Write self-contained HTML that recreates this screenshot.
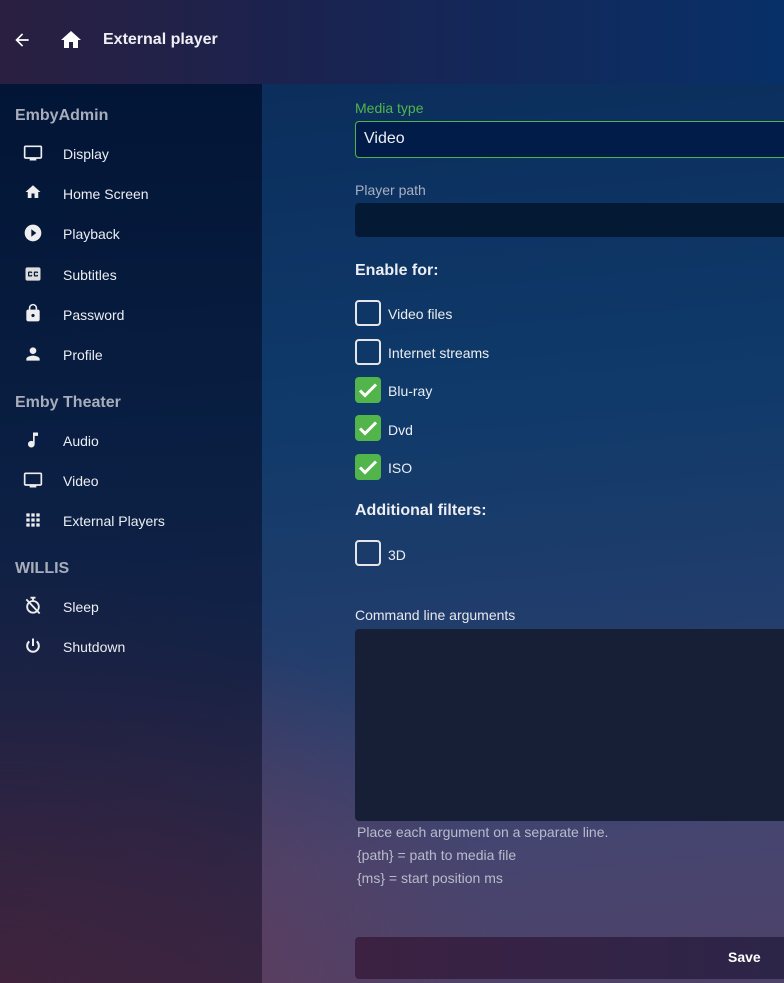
<!DOCTYPE html>
<html><head><meta charset="utf-8"><style>
*{margin:0;padding:0;box-sizing:border-box}
html,body{width:784px;height:983px;overflow:hidden}
body{font-family:"Liberation Sans",sans-serif;color:#e8e8ee;position:relative;
background:
radial-gradient(ellipse 500px 420px at 0% 100%, rgba(110,55,80,.8), rgba(110,55,80,0) 100%),
linear-gradient(175deg,#0a2a58 0%,#0f3a6a 42%,#223d6c 65%,#454570 85%,#4f4268 100%);}
.hdr{position:absolute;left:0;top:0;width:784px;height:84px;background:linear-gradient(90deg,#2a1f40 0%,#1a2350 40%,#083068 100%)}
.hdr .t{position:absolute;left:103px;top:31px;font-size:16px;font-weight:bold;color:#f0f0f4}
.side{position:absolute;left:0;top:84px;width:262px;height:899px;background:linear-gradient(180deg,rgba(0,15,45,.8) 0%,rgba(8,18,48,.65) 50%,rgba(25,12,35,.5) 100%)}
.sh{position:absolute;left:15px;font-size:16px;font-weight:bold;color:#a8adbb}
.it{position:absolute;left:63px;font-size:14px;color:#eceef2}
.ic{position:absolute;left:23px;width:20px;height:20px}
.lbl{position:absolute;left:355px;font-size:14px}
.cb{position:absolute;left:355px;width:26px;height:26px;border:2px solid #e6e6ea;border-radius:4px}
.cb.on{background:#52b54b;border:none}
.cl{position:absolute;left:388px;font-size:14px;color:#eceef2}
h3{position:absolute;left:355px;font-size:16px;font-weight:bold;color:#eceef2}
.hint{position:absolute;left:357px;font-size:14px;color:#b8bccb}
</style></head><body>
<div class="hdr">
<svg style="position:absolute;left:12px;top:30px" width="20" height="20" viewBox="0 0 24 24"><path fill="#fff" d="M20 11H7.83l5.59-5.59L12 4l-8 8 8 8 1.41-1.41L7.83 13H20v-2z"/></svg>
<svg style="position:absolute;left:59px;top:28px" width="24" height="24" viewBox="0 0 24 24"><path fill="#fff" d="M10 20v-6h4v6h5v-8h3L12 3 2 12h3v8z"/></svg>
<div class="t">External player</div>
</div>
<div class="side">
<div class="sh" style="top:23px">EmbyAdmin</div>
<svg class="ic" style="top:59px" viewBox="0 0 24 24"><path fill="#eee" d="M21 3H3c-1.1 0-2 .9-2 2v12c0 1.1.9 2 2 2h5v2h8v-2h5c1.1 0 2-.9 2-2V5c0-1.1-.9-2-2-2zm0 14H3V5h18v12z"/></svg>
<div class="it" style="top:62px">Display</div>
<svg class="ic" style="top:99px;left:24px;width:18px;height:18px" viewBox="0 0 24 24"><path fill="#eee" d="M10 20v-6h4v6h5v-8h3L12 3 2 12h3v8z"/></svg>
<div class="it" style="top:102px">Home Screen</div>
<svg class="ic" style="top:139px" viewBox="0 0 24 24"><path fill="#eee" d="M12 2C6.48 2 2 6.48 2 12s4.48 10 10 10 10-4.48 10-10S17.52 2 12 2zm-2 14.5v-9l6 4.5-6 4.5z"/></svg>
<div class="it" style="top:142px">Playback</div>
<svg class="ic" style="top:180px" viewBox="0 0 24 24"><path fill="#ddd" d="M19 4H5c-1.1 0-2 .9-2 2v12c0 1.1.9 2 2 2h14c1.1 0 2-.9 2-2V6c0-1.1-.9-2-2-2zm-8 7H9.5v-.5h-2v3h2V13H11v1c0 .55-.45 1-1 1H7c-.55 0-1-.45-1-1v-4c0-.55.45-1 1-1h3c.55 0 1 .45 1 1v1zm7 0h-1.5v-.5h-2v3h2V13H18v1c0 .55-.45 1-1 1h-3c-.55 0-1-.45-1-1v-4c0-.55.45-1 1-1h3c.55 0 1 .45 1 1v1z"/></svg>
<div class="it" style="top:183px">Subtitles</div>
<svg class="ic" style="top:219px" viewBox="0 0 24 24"><path fill="#eee" d="M18 8h-1V6c0-2.76-2.24-5-5-5S7 3.24 7 6v2H6c-1.1 0-2 .9-2 2v10c0 1.1.9 2 2 2h12c1.1 0 2-.9 2-2V10c0-1.1-.9-2-2-2zm-6 9c-1.1 0-2-.9-2-2s.9-2 2-2 2 .9 2 2-.9 2-2 2zm3.1-9H8.9V6c0-1.710 1.39-3.1 3.1-3.1 1.71 0 3.1 1.39 3.1 3.1v2z"/></svg>
<div class="it" style="top:223px">Password</div>
<svg class="ic" style="top:260px" viewBox="0 0 24 24"><path fill="#eee" d="M12 12c2.21 0 4-1.79 4-4s-1.79-4-4-4-4 1.79-4 4 1.79 4 4 4zm0 2c-2.67 0-8 1.34-8 4v2h16v-2c0-2.66-5.33-4-8-4z"/></svg>
<div class="it" style="top:263px">Profile</div>
<div class="sh" style="top:310px">Emby Theater</div>
<svg class="ic" style="top:346px" viewBox="0 0 24 24"><path fill="#eee" d="M12 3v10.55c-.59-.34-1.27-.55-2-.55-2.21 0-4 1.79-4 4s1.79 4 4 4 4-1.79 4-4V7h4V3h-6z"/></svg>
<div class="it" style="top:349px">Audio</div>
<svg class="ic" style="top:386px" viewBox="0 0 24 24"><path fill="#eee" d="M21 3H3c-1.1 0-2 .9-2 2v12c0 1.1.9 2 2 2h5v2h8v-2h5c1.1 0 2-.9 2-2V5c0-1.1-.9-2-2-2zm0 14H3V5h18v12z"/></svg>
<div class="it" style="top:389px">Video</div>
<svg class="ic" style="top:426px" viewBox="0 0 24 24"><path fill="#eee" d="M4 8h4V4H4v4zm6 12h4v-4h-4v4zm-6 0h4v-4H4v4zm0-6h4v-4H4v4zm6 0h4v-4h-4v4zm6-10v4h4V4h-4zm-6 4h4V4h-4v4zm6 6h4v-4h-4v4zm0 6h4v-4h-4v4z"/></svg>
<div class="it" style="top:429px">External Players</div>
<div class="sh" style="top:476px">WILLIS</div>
<svg class="ic" style="top:512px" viewBox="0 0 24 24"><path fill="none" stroke="#eee" stroke-width="2.2" d="M9 2h6M12 2v3M12 6a7 7 0 1 1 0 14a7 7 0 0 1 0-14zM4 4l16 17"/></svg>
<div class="it" style="top:515px">Sleep</div>
<svg class="ic" style="top:552px" viewBox="0 0 24 24"><path fill="none" stroke="#eee" stroke-width="2.4" d="M12 3v9M7.5 6.5a7 7 0 1 0 9 0"/></svg>
<div class="it" style="top:555px">Shutdown</div>
</div>

<div class="lbl" style="top:100px;color:#52b54b">Media type</div>
<div style="position:absolute;left:355px;top:121px;width:440px;height:37px;border:1px solid #52b54b;border-radius:4px;background:#021c4a;"></div>
<div style="position:absolute;left:364px;top:130px;font-size:16px;color:#f0f0f4">Video</div>
<div class="lbl" style="top:182px;color:#a8b0c0">Player path</div>
<div style="position:absolute;left:355px;top:203px;width:440px;height:34px;border-radius:4px;background:#041a34"></div>
<h3 style="top:262px">Enable for:</h3>
<div class="cb" style="top:300px"></div><div class="cl" style="top:306px">Video files</div>
<div class="cb" style="top:339px"></div><div class="cl" style="top:345px">Internet streams</div>
<div class="cb on" style="top:377px"><svg width="26" height="26" viewBox="0 0 26 26"><path d="M5 13.5l5 5 11-11" fill="none" stroke="#fff" stroke-width="3"/></svg></div><div class="cl" style="top:383px">Blu-ray</div>
<div class="cb on" style="top:415px"><svg width="26" height="26" viewBox="0 0 26 26"><path d="M5 13.5l5 5 11-11" fill="none" stroke="#fff" stroke-width="3"/></svg></div><div class="cl" style="top:422px">Dvd</div>
<div class="cb on" style="top:454px"><svg width="26" height="26" viewBox="0 0 26 26"><path d="M5 13.5l5 5 11-11" fill="none" stroke="#fff" stroke-width="3"/></svg></div><div class="cl" style="top:460px">ISO</div>
<h3 style="top:502px">Additional filters:</h3>
<div class="cb" style="top:540px"></div><div class="cl" style="top:547px">3D</div>
<div class="lbl" style="top:607px;color:#e6e8ee">Command line arguments</div>
<div style="position:absolute;left:355px;top:629px;width:440px;height:192px;border-radius:4px;background:#161f36"></div>
<div class="hint" style="top:824px">Place each argument on a separate line.</div>
<div class="hint" style="top:847px">{path} = path to media file</div>
<div class="hint" style="top:870px">{ms} = start position ms</div>
<div style="position:absolute;left:355px;top:937px;width:440px;height:42px;border-radius:4px;background:linear-gradient(90deg,#3c2142,#2c2548)"></div>
<div style="position:absolute;left:728px;top:949px;font-size:14px;font-weight:bold;color:#fff">Save</div>
</body></html>
